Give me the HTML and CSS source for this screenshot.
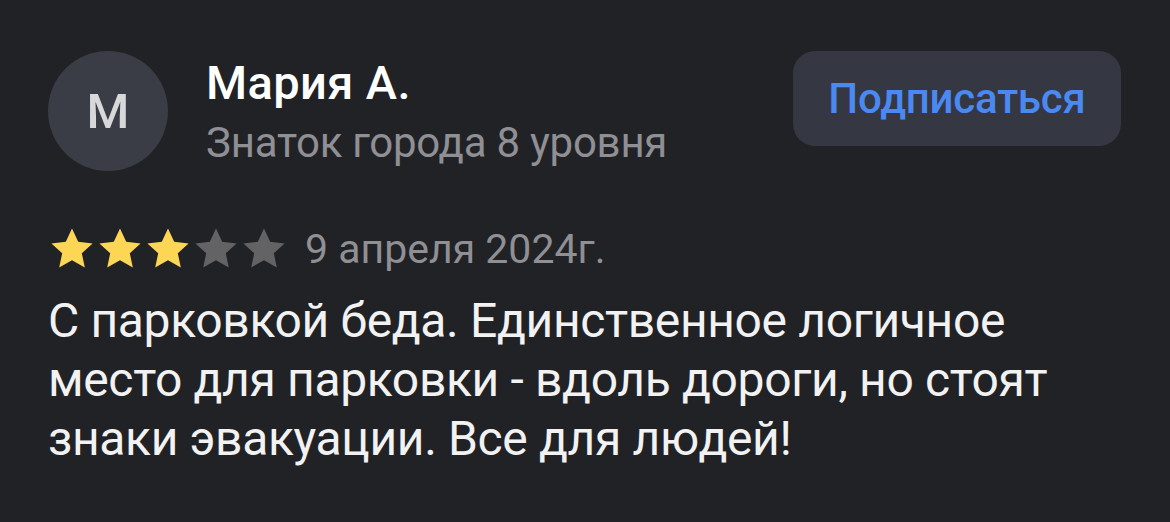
FILE: index.html
```html
<!DOCTYPE html>
<html lang="ru">
<head>
<meta charset="utf-8">
<link rel="stylesheet" href="styles.css">
</head>
<body>
<div class="review">
  <div class="header">
    <div class="avatar">М</div>
    <div class="author">
      <div class="name">Мария А.</div>
      <div class="level">Знаток города 8 уровня</div>
    </div>
    <button class="subscribe">Подписаться</button>
  </div>
  <div class="meta">
    <div class="stars">
      <svg class="star on" viewBox="0 0 24 24"><path d="M12 1.8l3.1 6.6 7.2.8-5.4 4.9 1.5 7.1L12 17.6l-6.4 3.6 1.5-7.1L1.7 9.2l7.2-.8z"/></svg>
      <svg class="star on" viewBox="0 0 24 24"><path d="M12 1.8l3.1 6.6 7.2.8-5.4 4.9 1.5 7.1L12 17.6l-6.4 3.6 1.5-7.1L1.7 9.2l7.2-.8z"/></svg>
      <svg class="star on" viewBox="0 0 24 24"><path d="M12 1.8l3.1 6.6 7.2.8-5.4 4.9 1.5 7.1L12 17.6l-6.4 3.6 1.5-7.1L1.7 9.2l7.2-.8z"/></svg>
      <svg class="star" viewBox="0 0 24 24"><path d="M12 1.8l3.1 6.6 7.2.8-5.4 4.9 1.5 7.1L12 17.6l-6.4 3.6 1.5-7.1L1.7 9.2l7.2-.8z"/></svg>
      <svg class="star" viewBox="0 0 24 24"><path d="M12 1.8l3.1 6.6 7.2.8-5.4 4.9 1.5 7.1L12 17.6l-6.4 3.6 1.5-7.1L1.7 9.2l7.2-.8z"/></svg>
    </div>
    <div class="date">9 апреля 2024г.</div>
  </div>
  <p class="text">С парковкой беда. Единственное логичное место для парковки - вдоль дороги, но стоят знаки эвакуации. Все для людей!</p>
</div>
</body>
</html>
```

FILE: styles.css
```css
html, body {
  margin: 0;
  padding: 0;
  background: #212226;
}
body {
  font-family: Roboto, "Noto Sans", sans-serif;
  width: 1170px;
  height: 522px;
  overflow: hidden;
}
.review {
  padding: 51px 49px 0 48px;
}
.header {
  display: flex;
  align-items: flex-start;
}
.avatar {
  width: 120px;
  height: 120px;
  border-radius: 50%;
  background: #3a3d45;
  color: #d8d8da;
  font-size: 49px;
  font-weight: 500;
  display: flex;
  align-items: center;
  justify-content: center;
  flex: none;
}
.author {
  margin-left: 38px;
  flex: 1;
  padding-top: 4px;
}
.name {
  color: #ffffff;
  font-size: 47px;
  font-weight: 500;
  line-height: 56px;
  letter-spacing: 0.4px;
}
.level {
  margin-top: 6px;
  color: #8f8f94;
  font-size: 42px;
  line-height: 52px;
  letter-spacing: -0.25px;
}
.subscribe {
  width: 328px;
  height: 95px;
  border: none;
  border-radius: 22px;
  background: #353843;
  color: #4b89f2;
  font-family: Roboto, "Noto Sans", sans-serif;
  font-size: 42px;
  font-weight: 500;
  letter-spacing: -0.2px;
  padding: 0;
  flex: none;
}
.meta {
  display: flex;
  align-items: center;
  margin-top: 54px;
}
.stars {
  display: flex;
}
.star {
  width: 48px;
  height: 48px;
  fill: #636366;
}
.star.on {
  fill: #fdd656;
}
.date {
  margin-left: 17px;
  color: #8f8f94;
  font-size: 41px;
  line-height: 48px;
}
.text {
  margin: 18px 0 0 0;
  color: #f2f2f2;
  font-size: 48px;
  line-height: 59px;
  letter-spacing: -0.35px;
  width: 1040px;
}
```
